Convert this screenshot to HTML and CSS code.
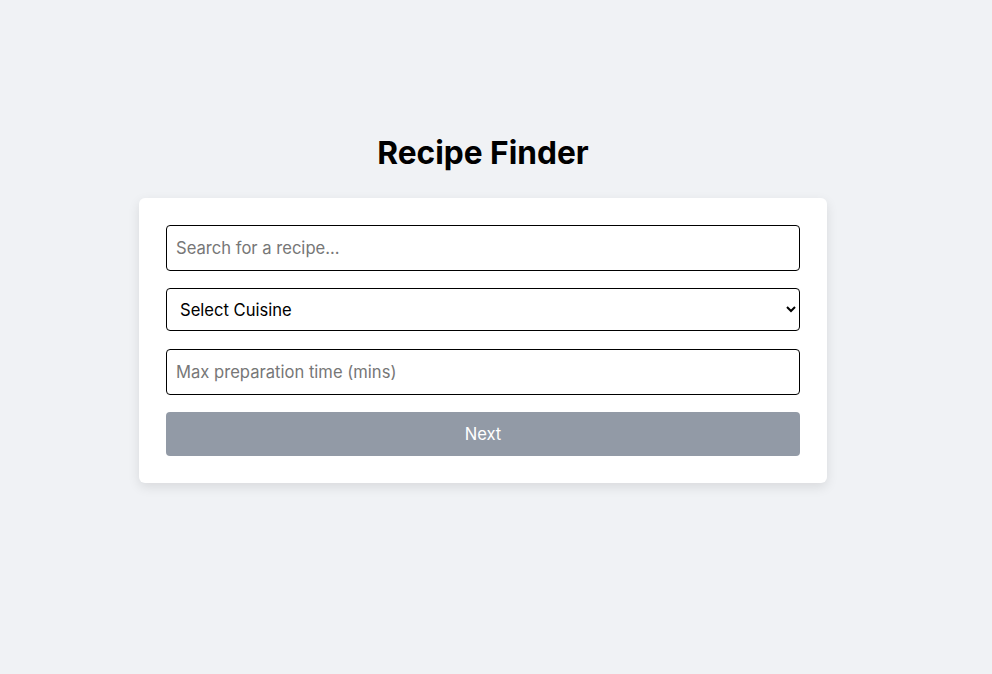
FILE: index.html
```html
<!DOCTYPE html>
<html lang="en">
<head>
<meta charset="utf-8">
<title>Recipe Finder</title>
<link rel="stylesheet" href="styles.css">
</head>
<body>
<main class="page">
  <h1 class="title">Recipe Finder</h1>
  <form class="card">
    <input class="field" type="text" placeholder="Search for a recipe...">
    <select class="field select">
      <option>Select Cuisine</option>
    </select>
    <input class="field" type="text" placeholder="Max preparation time (mins)">
    <button class="next" type="button" disabled>Next</button>
  </form>
</main>
</body>
</html>
```
FILE: styles.css
```css
* { box-sizing: border-box; }
html, body { margin: 0; padding: 0; }
body {
  background: #f0f2f5;
  font-family: Inter, "Liberation Sans", sans-serif;
  color: #000;
  height: 674px;
}
.page {
  width: 966px;
  display: flex;
  flex-direction: column;
  align-items: center;
  padding-top: 133px;
}
.title {
  margin: 0 0 26px;
  font-size: 31.7px;
  line-height: 39px;
  font-weight: 700;
}
.card {
  width: 688px;
  background: #fff;
  border-radius: 6px;
  padding: 27px;
  display: flex;
  flex-direction: column;
  gap: 17px;
  box-shadow: 0 4px 12px rgba(0,0,0,0.1);
}
.field {
  width: 100%;
  height: 46px;
  border: 1px solid #000;
  border-radius: 4px;
  padding: 0 9px;
  font-family: Inter, "Liberation Sans", sans-serif;
  font-size: 16.6px;
  color: #000;
  background: #fff;
  outline: none;
}
.field::placeholder { color: #777; }
.select {
  height: 43px;
  padding: 0 9px;
  margin-bottom: 1px;
}
.next {
  height: 44px;
  border: none;
  border-radius: 4px;
  background: #929aa6;
  color: #fff;
  font-family: Inter, "Liberation Sans", sans-serif;
  font-size: 16.6px;
}
```
